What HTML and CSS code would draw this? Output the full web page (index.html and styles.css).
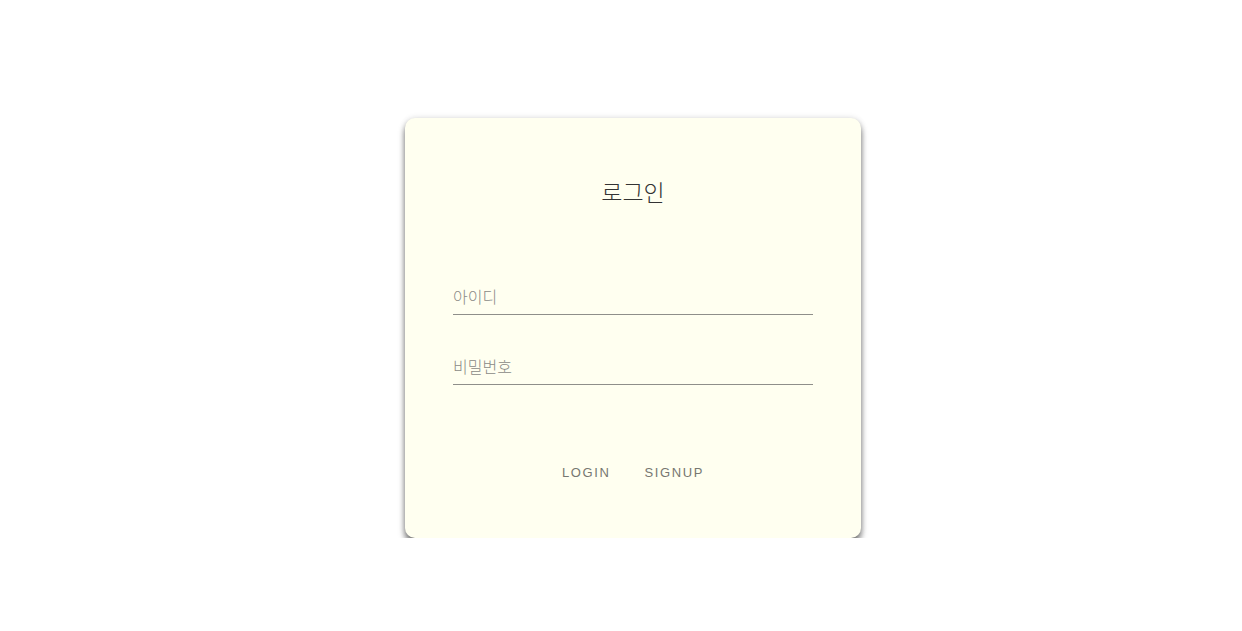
FILE: index.html
```html
<!DOCTYPE html>
<html lang="ko">
<head>
<meta charset="utf-8">
<title>로그인</title>
<link rel="stylesheet" href="styles.css">
</head>
<body>
<main class="page">
  <section class="card">
    <h1 class="title">로그인</h1>
    <form class="form">
      <label class="field"><input class="input" type="text" placeholder="아이디"></label>
      <label class="field"><input class="input" type="password" placeholder="비밀번호"></label>
      <div class="actions">
        <button type="button" class="btn">LOGIN</button>
        <button type="button" class="btn">SIGNUP</button>
      </div>
    </form>
  </section>
</main>
</body>
</html>
```
FILE: styles.css
```css
html, body {
  margin: 0;
  padding: 0;
  background: #ffffff;
  font-family: "Noto Sans CJK KR", "Liberation Sans", sans-serif;
}
.page {
  display: flex;
  justify-content: center;
  padding-top: 118px;
  padding-left: 24px;
}
.card {
  width: 456px;
  height: 420px;
  box-sizing: border-box;
  background: #fffff0;
  border-radius: 10px;
  box-shadow: 0 5px 6px rgba(0,0,0,0.55), 0 0 6px rgba(0,0,0,0.12);
  padding: 51px 48px 0;
}
.title {
  margin: 0;
  text-align: center;
  font-size: 23px;
  font-weight: 300;
  line-height: 44px;
  color: #333;
}
.form {
  display: flex;
  flex-direction: column;
  margin-top: 71px;
}
.field {
  display: block;
  border-bottom: 1px solid #8f8f8a;
  height: 30px;
  margin-bottom: 39px;
}
.input {
  display: block;
  width: 100%;
  height: 30px;
  box-sizing: border-box;
  border: 0;
  background: transparent;
  outline: none;
  padding: 0 0 7px;
  font-family: "Noto Sans CJK KR", sans-serif;
  font-size: 16px;
  font-weight: 300;
  color: #333;
}
.input::placeholder {
  color: #8a8a86;
}
.actions {
  display: flex;
  justify-content: center;
  gap: 2px;
  margin-top: 33px;
}
.btn {
  border: 0;
  background: transparent;
  font-family: "Liberation Sans", Arial, sans-serif;
  font-size: 13px;
  letter-spacing: 1.6px;
  color: #777771;
  padding: 8px 16px;
  cursor: pointer;
}
```
